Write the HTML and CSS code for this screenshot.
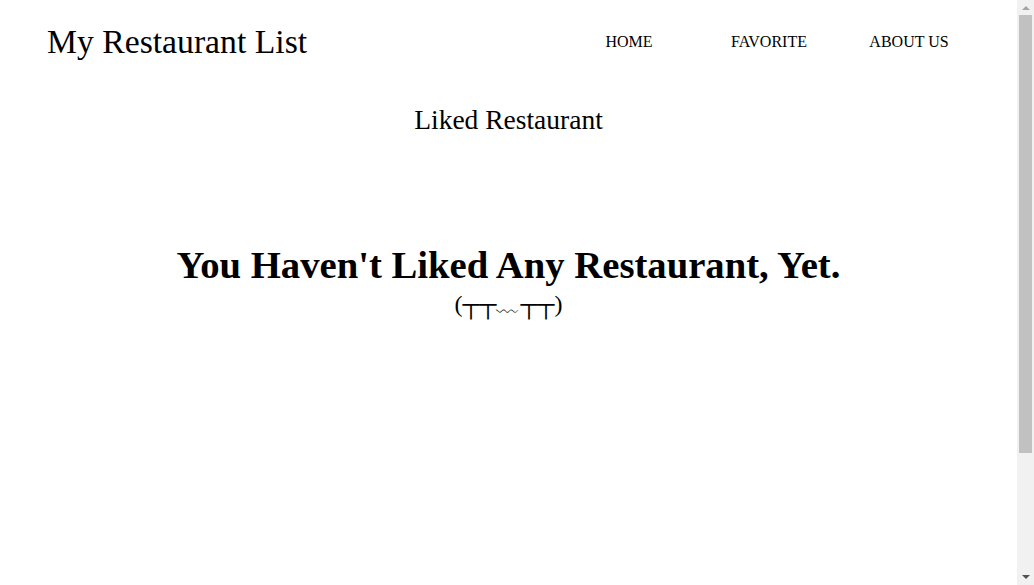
FILE: index.html
```html
<!DOCTYPE html>
<html lang="en">
<head>
<meta charset="utf-8">
<title>My Restaurant List</title>
<link rel="stylesheet" href="styles.css">
</head>
<body>
<div class="page">
  <header class="header">
    <a class="brand" href="#">My Restaurant List</a>
    <nav class="nav">
      <a class="nav-item" href="#">HOME</a>
      <a class="nav-item" href="#">FAVORITE</a>
      <a class="nav-item" href="#">ABOUT US</a>
    </nav>
  </header>
  <main class="main">
    <h2 class="page-title">Liked Restaurant</h2>
    <section class="empty">
      <h1 class="empty-title">You Haven't Liked Any Restaurant, Yet.</h1>
      <p class="empty-face">(┬┬﹏┬┬)</p>
    </section>
  </main>
</div>
<div class="scrollbar" aria-hidden="true">
  <span class="sb-arrow sb-up"></span>
  <span class="sb-thumb"></span>
  <span class="sb-arrow sb-down"></span>
</div>
</body>
</html>
```
FILE: styles.css
```css
html, body {
  margin: 0;
  padding: 0;
}
body {
  font-family: "Liberation Serif", "DejaVu Serif", serif;
  color: #000;
  background: #fff;
}
a {
  color: inherit;
  text-decoration: none;
}
.page {
  margin-right: 17px;
  min-height: 741px;
}
.header {
  display: flex;
  align-items: center;
  justify-content: space-between;
  padding: 22px 38px 0 47px;
  height: 40px;
}
.brand {
  font-size: 33.7px;
}
.nav {
  display: flex;
}
.nav-item {
  width: 140px;
  text-align: center;
  font-size: 16px;
}
.main {
  display: flex;
  flex-direction: column;
  align-items: center;
}
.page-title {
  font-weight: 400;
  font-size: 27.5px;
  margin: 42px 0 0;
}
.empty {
  margin-top: 107px;
  text-align: center;
}
.empty-title {
  font-size: 38.7px;
  font-weight: 700;
  margin: 0;
}
.empty-face {
  font-size: 24px;
  margin: 5px 0 0;
  line-height: 1;
}
.scrollbar {
  position: fixed;
  top: 0;
  right: 0;
  width: 17px;
  height: 100vh;
  background: #f1f1f1;
  display: flex;
  flex-direction: column;
  align-items: center;
}
.sb-arrow {
  width: 0;
  height: 0;
  border-left: 4px solid transparent;
  border-right: 4px solid transparent;
}
.sb-up {
  margin-top: 6px;
  border-bottom: 4px solid #a3a3a3;
}
.sb-down {
  margin-top: auto;
  margin-bottom: 6px;
  border-top: 4px solid #505050;
}
.sb-thumb {
  width: 13px;
  height: 438px;
  margin-top: 5px;
  background: #c1c1c1;
}
```
